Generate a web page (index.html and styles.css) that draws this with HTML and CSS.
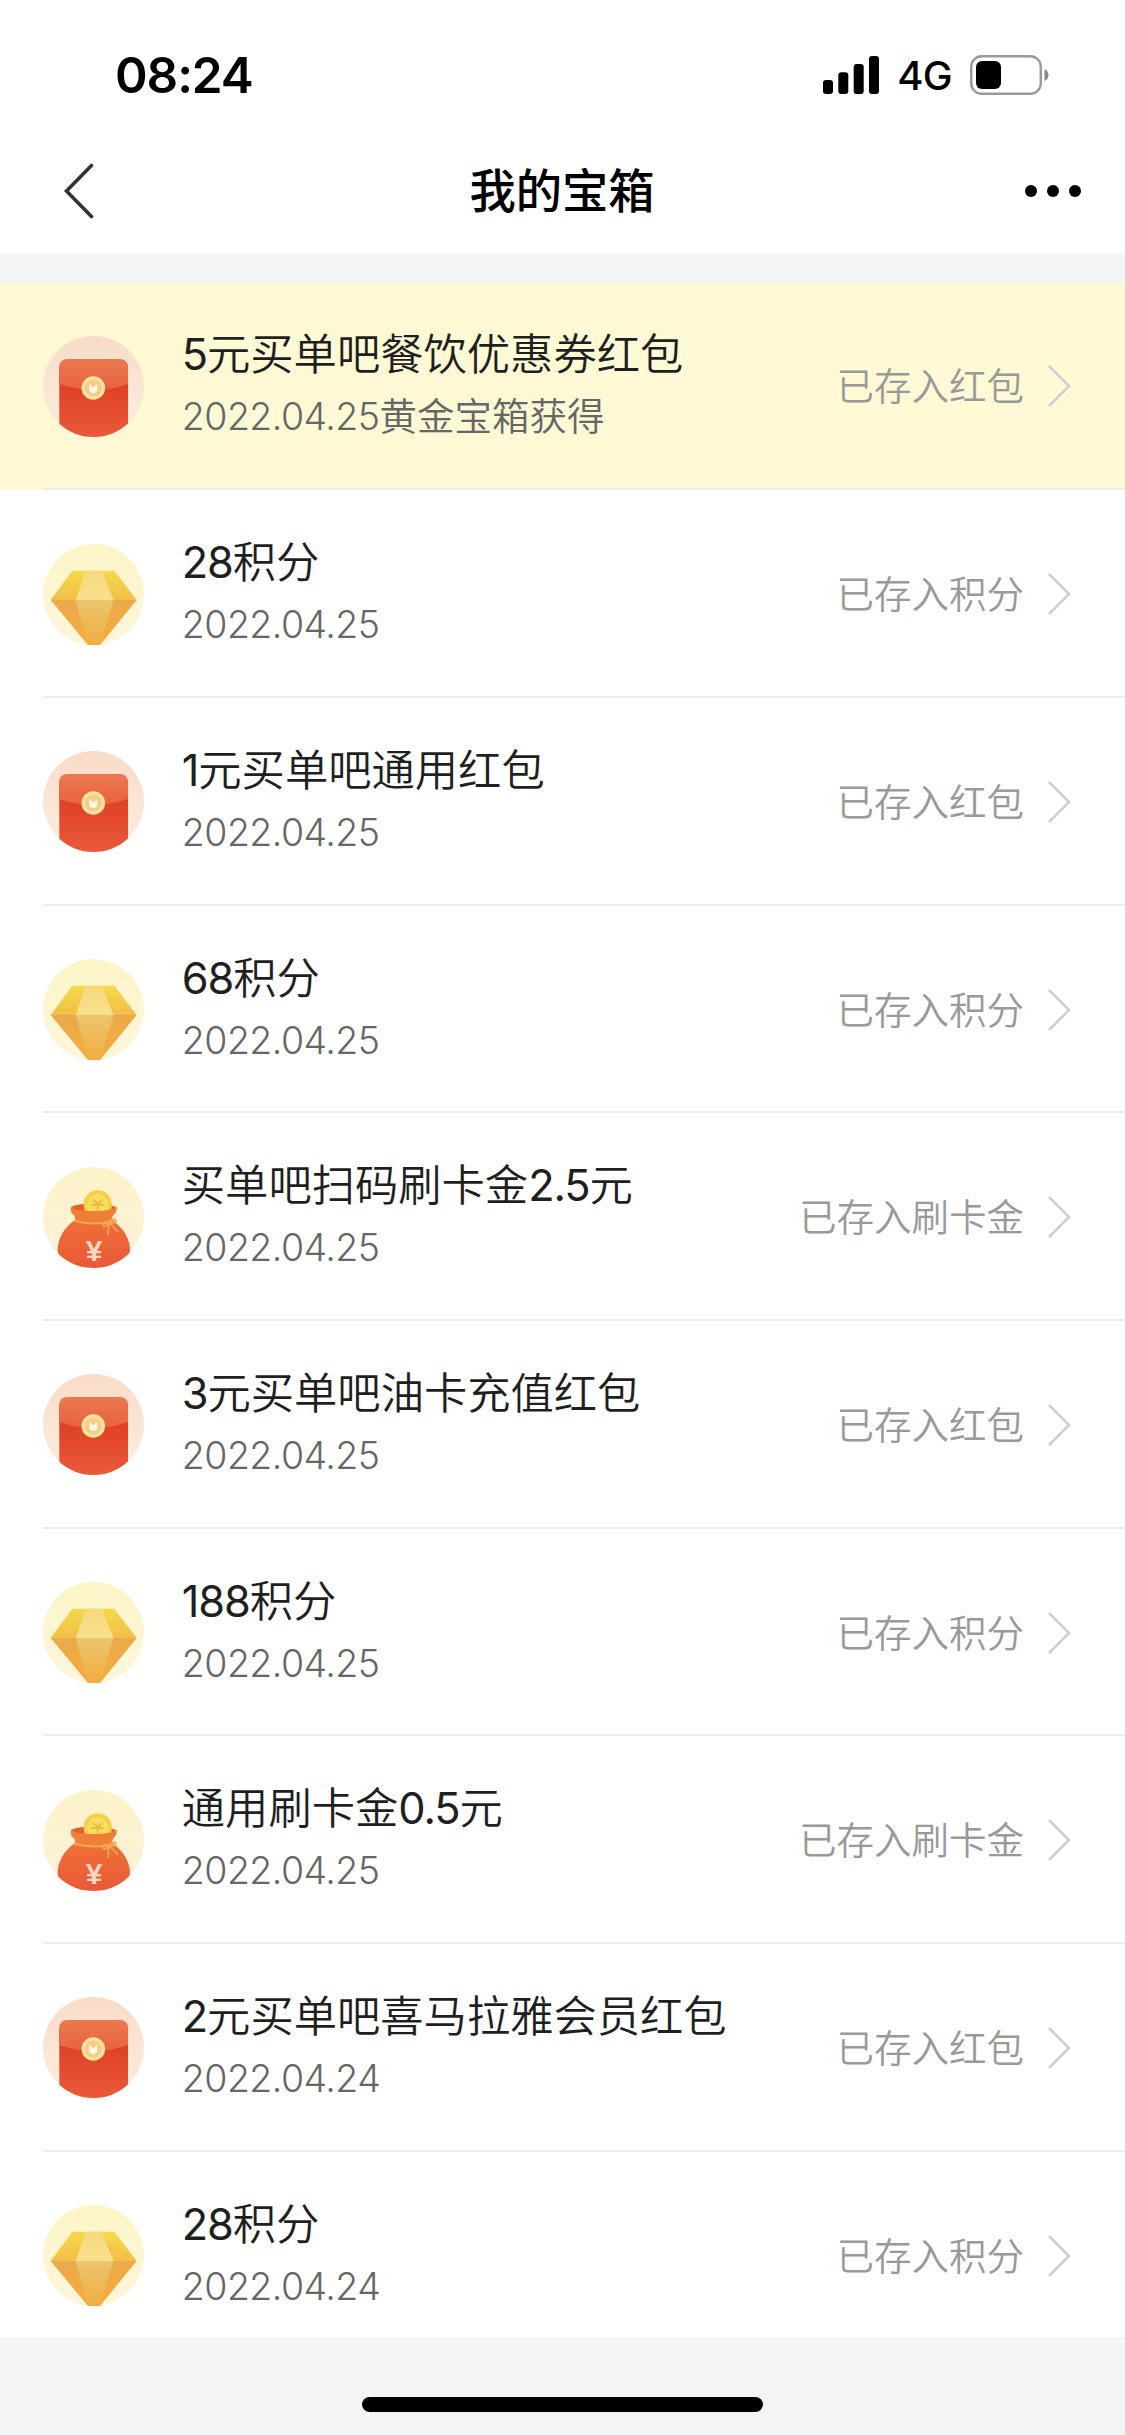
FILE: index.html
```html
<!DOCTYPE html>
<html lang="zh-CN">
<head>
<meta charset="utf-8">
<title>我的宝箱</title>
<link rel="stylesheet" href="styles.css">
</head>
<body>
<svg class="defs" width="0" height="0" aria-hidden="true">
  <defs>
    <clipPath id="disc"><circle cx="50.5" cy="50.5" r="50.5"/></clipPath>
    <linearGradient id="packet-bg" x2="0" y2="1"><stop stop-color="#f9dcc8"/><stop offset="1" stop-color="#fbeee0"/></linearGradient>
    <linearGradient id="flap" x2="0" y2="1"><stop stop-color="#eb7950"/><stop offset="1" stop-color="#e8623f"/></linearGradient>
    <linearGradient id="packet" x2="0" y2="1"><stop offset=".3" stop-color="#df3f25"/><stop offset="1" stop-color="#e95a3a"/></linearGradient>
    <linearGradient id="gem-bg" x2="0" y2="1"><stop stop-color="#fdf5c6"/><stop offset="1" stop-color="#fdf6dc"/></linearGradient>
    <linearGradient id="gem-top" x2="0" y2="1"><stop stop-color="#f7d84b"/><stop offset="1" stop-color="#f2bf48"/></linearGradient>
    <linearGradient id="gem-top-mid" x2="0" y2="1"><stop stop-color="#f4da7c"/><stop offset="1" stop-color="#f9e08e"/></linearGradient>
    <linearGradient id="gem-low" x2="0" y2="1"><stop stop-color="#eba94b"/><stop offset="1" stop-color="#f5ac3c"/></linearGradient>
    <linearGradient id="gem-low-mid" x2="0" y2="1"><stop stop-color="#ebc56f"/><stop offset="1" stop-color="#f2ad40"/></linearGradient>
    <linearGradient id="bag-bg" x2="0" y2="1"><stop stop-color="#fdf3c8"/><stop offset="1" stop-color="#fdf0dc"/></linearGradient>
    <linearGradient id="bag" x2="0" y2="1"><stop stop-color="#ee7036"/><stop offset="1" stop-color="#ea5838"/></linearGradient>
    <symbol id="icon-packet" viewBox="0 0 101 101">
      <g clip-path="url(#disc)">
        <rect width="101" height="101" fill="url(#packet-bg)"/>
        <path d="M16.300 32q0-8.700 8.700-8.700h51.300q8.700 0 8.700 8.700v69H16.300z" fill="url(#packet)"/>
        <path d="M16.300 32q0-8.700 8.700-8.700h51.300q8.700 0 8.700 8.700v16q-34.300 12-68.700 0z" fill="url(#flap)"/>
      </g>
      <circle cx="50.300" cy="52" r="11.800" fill="#f8e3a0"/>
      <circle cx="50.300" cy="52" r="8.600" fill="#f5cd84"/>
      <path d="M46.800 48.500l3.500 3.600 3.500-3.600v6.600l-3.500 2-3.500-2z" fill="#fff8e8" stroke="#fff8e8"/>
    </symbol>
    <symbol id="icon-gem" viewBox="0 0 101 101">
      <circle cx="50.500" cy="50.500" r="50.500" fill="url(#gem-bg)"/>
      <path d="M29.300 26.700h42L93.700 56h-86z" fill="url(#gem-top)"/>
      <path d="M43 26.700h15.700L70.500 56H32.700z" fill="url(#gem-top-mid)"/>
      <path d="M7.700 56h86L57 101H45z" fill="url(#gem-low)"/>
      <path d="M32.700 56h37.800L57 101H45z" fill="url(#gem-low-mid)"/>
    </symbol>
    <symbol id="icon-bag" viewBox="0 0 101 101">
      <g clip-path="url(#disc)">
        <rect width="101" height="101" fill="url(#bag-bg)"/>
        <path d="M28 40q8-4 22.500-3.500T73 40l-4 10H34z" fill="#e2602c"/>
        <circle cx="54.700" cy="37.500" r="14.200" fill="#f6cf45"/>
        <circle cx="54.700" cy="37.500" r="10.500" fill="#f9dc62"/>
        <path d="M50 33l4.700 4 4.700-4M48.500 38h12M54.700 36v8" stroke="#eebc3c" stroke-width="1.800" fill="none"/>
        <path d="M32 53C20 61 14.700 73 14.700 83q0 18 36.300 18t36-18C87 73 81 61 69 53z" fill="url(#bag)"/>
        <path d="M28 39.500q-1 5.500 2 8 4 3 1 7.500 19 5 39-.5-2-3.500.5-6.500 4-3 3-9-3 5-22.500 5T28 39.500z" fill="#ef7f36"/>
        <path d="M31 53.500q17 5 39 1.500" stroke="#f6a653" stroke-width="2" fill="none"/>
        <path d="M66 55q-6-1-6 3 2 3.500 6-3 5-5 7-1-1 3-7 1l-1 13m1-13 9 10" stroke="#f6a653" stroke-width="1.800" fill="none"/>
      </g>
      <text class="yen" x="51" y="93.500" text-anchor="middle">¥</text>
    </symbol>
    <symbol id="icon-chevron" viewBox="0 0 24 44"><path d="M2 2l20 20L2 42" fill="none" stroke="#cfcfcf" stroke-width="2.600"/></symbol>
  </defs>
</svg>
<header class="header">
  <div class="status">
    <span class="time">08:24</span>
    <div class="status-right">
      <svg width="57" height="38" viewBox="0 0 57 38"><rect y="24" width="10" height="14" rx="3"/><rect x="15.300" y="16.300" width="10" height="21.700" rx="3"/><rect x="30.700" y="8" width="10" height="30" rx="3"/><rect x="46" width="10" height="38" rx="3"/></svg>
      <span class="network">4G</span>
      <svg width="79" height="40" viewBox="0 0 79 40"><rect x="1.200" y="1.200" width="69.600" height="37.600" rx="10.500" fill="none" stroke="#999" stroke-width="2.400"/><rect x="6" y="6" width="25" height="28" rx="6"/><path d="M74.500 14q4 2 4 6t-4 6z" fill="#888"/></svg>
    </div>
  </div>
  <nav class="nav">
    <svg width="30" height="56" viewBox="0 0 30 56"><path d="M27.500 2.500L2.500 28l25 25.500" fill="none" stroke="#333" stroke-width="3.600" stroke-linecap="round"/></svg>
    <h1 class="nav-title">我的宝箱</h1>
    <svg width="56" height="12" viewBox="0 0 56 12"><circle cx="6" cy="6" r="6"/><circle cx="28" cy="6" r="6"/><circle cx="50" cy="6" r="6"/></svg>
  </nav>
</header>
<main class="list">
  <div class="row highlight"><svg class="icon"><use href="#icon-packet"/></svg><div class="info"><p class="name"><span class="num">5</span>元买单吧餐饮优惠券红包</p><p class="date"><span class="num">2022.04.25</span>黄金宝箱获得</p></div><span class="state">已存入红包</span><svg class="chevron"><use href="#icon-chevron"/></svg></div>
  <div class="row"><svg class="icon"><use href="#icon-gem"/></svg><div class="info"><p class="name"><span class="num">28</span>积分</p><p class="date"><span class="num">2022.04.25</span></p></div><span class="state">已存入积分</span><svg class="chevron"><use href="#icon-chevron"/></svg></div>
  <div class="row"><svg class="icon"><use href="#icon-packet"/></svg><div class="info"><p class="name"><span class="num">1</span>元买单吧通用红包</p><p class="date"><span class="num">2022.04.25</span></p></div><span class="state">已存入红包</span><svg class="chevron"><use href="#icon-chevron"/></svg></div>
  <div class="row"><svg class="icon"><use href="#icon-gem"/></svg><div class="info"><p class="name"><span class="num">68</span>积分</p><p class="date"><span class="num">2022.04.25</span></p></div><span class="state">已存入积分</span><svg class="chevron"><use href="#icon-chevron"/></svg></div>
  <div class="row"><svg class="icon"><use href="#icon-bag"/></svg><div class="info"><p class="name">买单吧扫码刷卡金<span class="num">2.5</span>元</p><p class="date"><span class="num">2022.04.25</span></p></div><span class="state">已存入刷卡金</span><svg class="chevron"><use href="#icon-chevron"/></svg></div>
  <div class="row"><svg class="icon"><use href="#icon-packet"/></svg><div class="info"><p class="name"><span class="num">3</span>元买单吧油卡充值红包</p><p class="date"><span class="num">2022.04.25</span></p></div><span class="state">已存入红包</span><svg class="chevron"><use href="#icon-chevron"/></svg></div>
  <div class="row"><svg class="icon"><use href="#icon-gem"/></svg><div class="info"><p class="name"><span class="num">188</span>积分</p><p class="date"><span class="num">2022.04.25</span></p></div><span class="state">已存入积分</span><svg class="chevron"><use href="#icon-chevron"/></svg></div>
  <div class="row"><svg class="icon"><use href="#icon-bag"/></svg><div class="info"><p class="name">通用刷卡金<span class="num">0.5</span>元</p><p class="date"><span class="num">2022.04.25</span></p></div><span class="state">已存入刷卡金</span><svg class="chevron"><use href="#icon-chevron"/></svg></div>
  <div class="row"><svg class="icon"><use href="#icon-packet"/></svg><div class="info"><p class="name"><span class="num">2</span>元买单吧喜马拉雅会员红包</p><p class="date"><span class="num">2022.04.24</span></p></div><span class="state">已存入红包</span><svg class="chevron"><use href="#icon-chevron"/></svg></div>
  <div class="row"><svg class="icon"><use href="#icon-gem"/></svg><div class="info"><p class="name"><span class="num">28</span>积分</p><p class="date"><span class="num">2022.04.24</span></p></div><span class="state">已存入积分</span><svg class="chevron"><use href="#icon-chevron"/></svg></div>
</main>
<footer class="footer"><div class="home-bar"></div></footer>
</body>
</html>
```
FILE: styles.css
```css
* { box-sizing: border-box; margin: 0; padding: 0; }
body {
  width: 1125px;
  height: 2435px;
  overflow: hidden;
  display: flex;
  flex-direction: column;
  background: #f3f4f6;
  font-family: Inter, "Noto Sans CJK SC", sans-serif;
  color: #1f1f1f;
}
svg { display: block; flex: none; }
.defs { position: absolute; }
.header { height: 254px; background: #fff; color: #000; flex: none; }
.status {
  height: 150px;
  padding: 0 76px 0 115px;
  display: flex;
  align-items: center;
  justify-content: space-between;
}
.time { font-size: 49.500px; font-weight: 600; letter-spacing: -1.100px; }
.status-right { display: flex; align-items: center; }
.network { margin: 2px 18px 0 17px; font-size: 40px; font-weight: 450; line-height: 40px; letter-spacing: -0.700px; }
.nav {
  height: 82px;
  padding: 0 44px 0 64px;
  display: grid;
  grid-template-columns: 56px 1fr 56px;
  align-items: center;
}
.nav-title { text-align: center; font-size: 46.300px; font-weight: 550; line-height: 60px; margin-right: 21px; }
.list { height: 2054.400px; margin-top: 28.600px; background: #fff; overflow: hidden; flex: none; }
.row {
  height: 207.700px;
  padding: 0 54px 0 43.300px;
  display: flex;
  align-items: center;
  background: linear-gradient(#ececec, #ececec) 43px 100% / 100% 2px no-repeat;
}
.row.highlight { background-color: #fff9d6; }
.icon { width: 101px; height: 101px; }
.yen { font: 700 30px "Liberation Sans", sans-serif; fill: #fdd9c4; }
.info { flex: 1; margin-left: 37.500px; padding-bottom: 6px; }
.name { font-size: 43.300px; line-height: 60px; font-weight: 350; white-space: nowrap; }
.name .num { letter-spacing: -1.100px; font-weight: 380; }
.date { margin-top: 8px; font-size: 37.500px; line-height: 50px; color: #666; font-weight: 350; }
.date .num { font-weight: 330; letter-spacing: -0.550px; }
.state { padding-top: 2px; font-size: 37.500px; line-height: 50px; color: #999; font-weight: 350; white-space: nowrap; }
.chevron { width: 24px; height: 44px; margin-left: 23px; }
.footer { flex: 1; display: flex; justify-content: center; align-items: flex-start; padding-top: 60px; }
.home-bar { width: 401px; height: 15px; border-radius: 8px; background: #000; }
```
